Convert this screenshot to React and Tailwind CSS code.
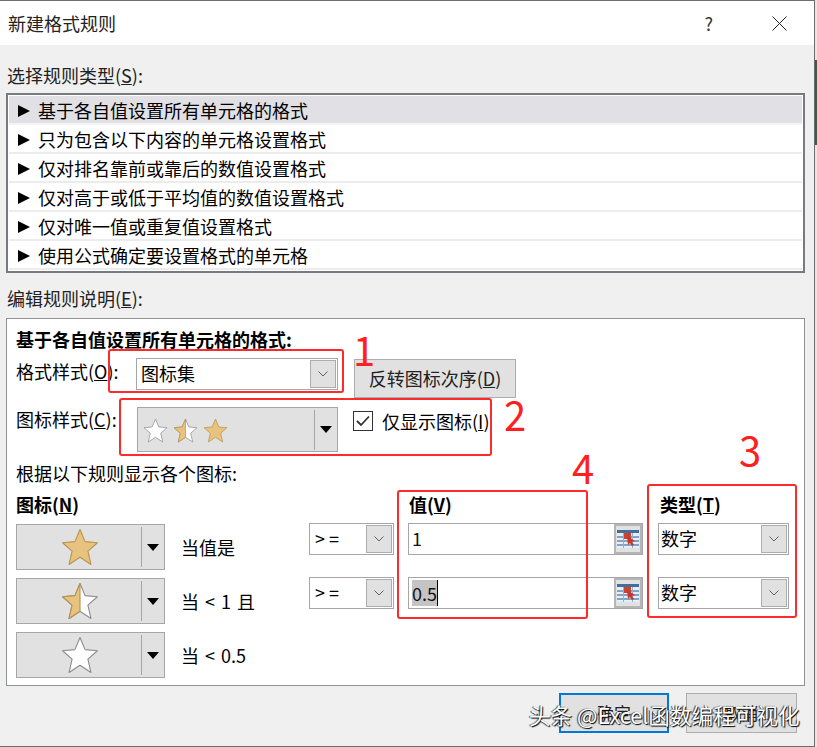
const RULES = [
  "基于各自值设置所有单元格的格式",
  "只为包含以下内容的单元格设置格式",
  "仅对排名靠前或靠后的数值设置格式",
  "仅对高于或低于平均值的数值设置格式",
  "仅对唯一值或重复值设置格式",
  "使用公式确定要设置格式的单元格",
];

const STAR = "12,1 15.2,8.6 23,9.3 17,14.6 18.9,23 12,18.5 5.1,23 7,14.6 1,9.3 8.8,8.6";

function Star({ kind, size }) {
  const gold = kind === "gold";
  const half = kind === "half";
  return (
    <svg width={size} height={size} viewBox="0 0 24 24" className="block shrink-0">
      <polygon
        points={STAR}
        fill={gold ? "#e8c27f" : "#ffffff"}
        stroke={gold ? "#b8924e" : "#8c8c8c"}
        strokeWidth="0.7"
        strokeLinejoin="round"
      />
      {half && (
        <polygon
          points="12,1 12,18.5 5.1,23 7,14.6 1,9.3 8.8,8.6"
          fill="#e8c27f"
          stroke="#b8924e"
          strokeWidth="0.7"
          strokeLinejoin="round"
        />
      )}
    </svg>
  );
}

function Chevron() {
  return (
    <span className="flex h-full w-[26px] items-center justify-center border border-[#adadad] bg-[#e1e1e1]">
      <svg width="12" height="8" viewBox="0 0 12 8">
        <path d="M1.5 1.5 L6 6 L10.5 1.5" fill="none" stroke="#606060" strokeWidth="1" />
      </svg>
    </span>
  );
}

function Combo({ text, className }) {
  return (
    <div className={`flex items-center justify-between border border-[#a6a6a6] bg-white p-px ${className}`}>
      <span className="pb-[2px] text-[18px] leading-none text-black">{text}</span>
      <Chevron />
    </div>
  );
}

function DropArrow() {
  return <span className="block h-0 w-0 border-x-[6px] border-t-[7px] border-x-transparent border-t-black" />;
}

function IconCombo({ kind }) {
  return (
    <div className="mt-px flex h-[46px] w-[149px] items-center border border-[#a6a6a6] bg-[#e1e1e1]">
      <div className="flex w-[124px] items-center justify-center pl-[2px]">
        <Star kind={kind} size={38} />
      </div>
      <span className="h-[40px] w-px bg-[#a6a6a6]" />
      <div className="flex flex-1 items-center justify-center">
        <DropArrow />
      </div>
    </div>
  );
}

function ValueInput({ value, focused }) {
  return (
    <div className="flex h-[32px] w-[235px] items-stretch border border-[#a6a6a6] bg-white">
      <div className="flex flex-1 items-center pb-px pl-[3px] text-[18px] text-[#111]">
        {focused ? (
          <span className="flex items-center border-r border-black bg-[#c4c4c4] leading-[26px]">{value}</span>
        ) : (
          value
        )}
      </div>
      <div className="flex w-[28px] items-center justify-center border-[2px] border-[#b5b5b5] bg-[#e1e1e1]">
        <svg width="22" height="18" viewBox="0 0 22 18">
          <rect x="0" y="0" width="22" height="18" fill="#e8eef6" />
          <rect x="0" y="0" width="22" height="3" fill="#3f6f9d" />
          <path d="M0 7h22M0 11h22M0 15h22" stroke="#5f8cb8" strokeWidth="1.6" />
          <path d="M6.5 3v15M15.5 3v15" stroke="#8fb0cf" strokeWidth="1" />
          <rect x="7" y="3" width="7" height="6" fill="#d0402f" />
          <path d="M10 6 L18 11 L15 12 L17 15 L15 16 L13 13 L11 15 Z" fill="#c8362b" />
        </svg>
      </div>
    </div>
  );
}

function RuleRow({ kind, label, op, value, focused }) {
  return (
    <div className="flex h-[54px] items-start">
      <IconCombo kind={kind} />
      <div className="ml-[16px] flex h-[49px] w-[128px] items-center text-[18px] text-black [word-spacing:2px]">{label}</div>
      {op ? (
        <>
          <Combo text="> =" className="h-[32px] w-[85px] pl-[5px]" />
          <div className="ml-[14px]">
            <ValueInput value={value} focused={focused} />
          </div>
          <div className="ml-[15px]">
            <Combo text="数字" className="h-[32px] w-[131px] pl-[2px]" />
          </div>
        </>
      ) : null}
    </div>
  );
}

function Note({ className, num, numClass }) {
  return (
    <>
      <div className={`pointer-events-none absolute rounded-[3px] border-[2px] border-[#ff2a2a] ${className}`} />
      <span className={`pointer-events-none absolute text-[40px] leading-none text-[#ff1f1f] ${numClass}`}>{num}</span>
    </>
  );
}

export default function App() {
  return (
    <div
      className="relative flex h-[747px] w-[817px] overflow-hidden bg-[#f0f0f0] text-black"
      style={{ fontFamily: '"Noto Sans CJK SC", "Noto Sans", sans-serif' }}
    >
      <div className="flex h-full w-[815px] flex-col border-y border-r border-[#6e6e6e]">
        {/* Title bar */}
        <div className="flex h-[44px] items-center bg-white pl-[8px] pr-[27px]">
          <span className="flex-1 text-[18px] text-[#222]">新建格式规则</span>
          <span className="mr-[59px] text-[18px] text-[#333]">?</span>
          <svg width="15" height="15" viewBox="0 0 15 15">
            <path d="M0.5 0.5 L14.5 14.5 M14.5 0.5 L0.5 14.5" stroke="#222" strokeWidth="1" />
          </svg>
        </div>

        <div className="flex-1 px-[6px]">
          <div className="flex h-[48px] items-end pb-[5px] pl-px text-[18px] leading-[26px] text-[#222]">
            选择规则类型(<u>S</u>):
          </div>

          {/* Rule type list */}
          <div className="h-[180px] w-[799px] border-[2px] border-[#777b80] bg-white p-px">
            {RULES.map((rule, i) => (
              <div
                key={rule}
                className={`flex h-[29px] items-center border-b-[2px] pl-[9px] pt-[2px] text-[18px] ${
                  i === 0 ? "border-[#f4f4f4] bg-[#e0e0e5]" : "border-[#ececec]"
                }`}
              >
                <span className="mr-[8px] block h-0 w-0 border-y-[6px] border-l-[12px] border-y-transparent border-l-black" />
                {rule}
              </div>
            ))}
          </div>

          <div className="flex h-[45px] items-center pl-px pt-[5px] text-[18px] leading-[26px] text-[#222]">
            编辑规则说明(<u>E</u>):
          </div>

          {/* Rule description */}
          <div className="h-[368px] w-[799px] border border-[#8f9295] bg-white pl-[9px] pt-[8px]">
            <div className="h-[24px] text-[18px] font-bold leading-[24px]">基于各自值设置所有单元格的格式:</div>

            <div className="mt-[7px] flex h-[40px] items-start">
              <div className="flex h-[26px] w-[120px] items-center text-[18px]">
                格式样式(<u>O</u>):
              </div>
              <Combo text="图标集" className="h-[32px] w-[202px] pl-[4px]" />
              <button className="ml-[16px] mt-px h-[39px] w-[162px] border border-[#adadad] bg-[#e1e1e1] pb-px text-[18px] text-[#222]">
                反转图标次序(<u>D</u>)
              </button>
            </div>

            <div className="mt-[9px] flex h-[45px] items-start">
              <div className="flex h-[25px] w-[121px] items-center text-[18px]">
                图标样式(<u>C</u>):
              </div>
              <div className="flex h-[45px] w-[201px] items-center border border-[#a6a6a6] bg-[#e1e1e1]">
                <div className="flex w-[176px] items-center gap-[5px] pl-[5px] pt-px">
                  <Star kind="white" size={25} />
                  <Star kind="half" size={25} />
                  <Star kind="gold" size={25} />
                </div>
                <span className="h-[40px] w-px bg-[#a6a6a6]" />
                <div className="flex flex-1 items-center justify-center">
                  <DropArrow />
                </div>
              </div>
              <div className="ml-[15px] mt-[4px] flex h-[20px] w-[20px] items-center justify-center border border-[#333] bg-white">
                <svg width="14" height="12" viewBox="0 0 14 12">
                  <path d="M1 6 L5 10 L13 1.5" fill="none" stroke="#333" strokeWidth="1.8" />
                </svg>
              </div>
              <div className="ml-[9px] mt-px text-[18px] leading-[26px]">
                仅显示图标(<u>I</u>)
              </div>
            </div>

            <div className="mt-[9px] h-[24px] text-[18px] leading-[24px]">根据以下规则显示各个图标:</div>

            <div className="mt-[7px] flex h-[31px] items-start text-[18px] font-bold leading-[24px]">
              <span className="w-[393px]">
                图标(<u>N</u>)
              </span>
              <span className="w-[251px]">
                值(<u>V</u>)
              </span>
              <span>
                类型(<u>T</u>)
              </span>
            </div>

            <RuleRow kind="gold" label="当值是" op value="1" />
            <RuleRow kind="half" label="当 < 1 且" op value="0.5" focused />
            <RuleRow kind="white" label="当 < 0.5" />
          </div>

          {/* Footer buttons */}
          <div className="flex justify-end gap-[17px] pr-[11px] pt-[7px]">
            <button className="h-[40px] w-[110px] border-[2px] border-[#0078d4] bg-[#e1e1e1] text-[17px] text-[#222]">确定</button>
            <button className="h-[40px] w-[111px] border border-[#adadad] bg-[#e1e1e1] text-[17px] text-[#222]">取消</button>
          </div>
        </div>
      </div>

      {/* Background app peeking out on the right edge */}
      <div className="flex h-full flex-1 flex-col bg-[#e6e6e6]">
        <div className="h-[60px]" />
        <div className="h-[85px] bg-[#1f6a41]" />
      </div>

      {/* Red hand drawn annotations */}
      <Note className="left-[108px] top-[349px] h-[44px] w-[236px]" num="1" numClass="left-[353px] top-[329px]" />
      <Note className="left-[119px] top-[398px] h-[58px] w-[373px]" num="2" numClass="left-[504px] top-[394px]" />
      <Note className="left-[647px] top-[484px] h-[134px] w-[150px]" num="3" numClass="left-[739px] top-[429px]" />
      <Note className="left-[397px] top-[490px] h-[129px] w-[191px]" num="4" numClass="left-[572px] top-[447px]" />

      {/* Watermark */}
      <div className="absolute left-[529px] top-[700px] text-[21.6px] leading-[30px] text-white [text-shadow:1px_1px_1px_#000,-1px_0_1px_#333]">
        头条 @Excel函数编程可视化
      </div>
    </div>
  );
}
